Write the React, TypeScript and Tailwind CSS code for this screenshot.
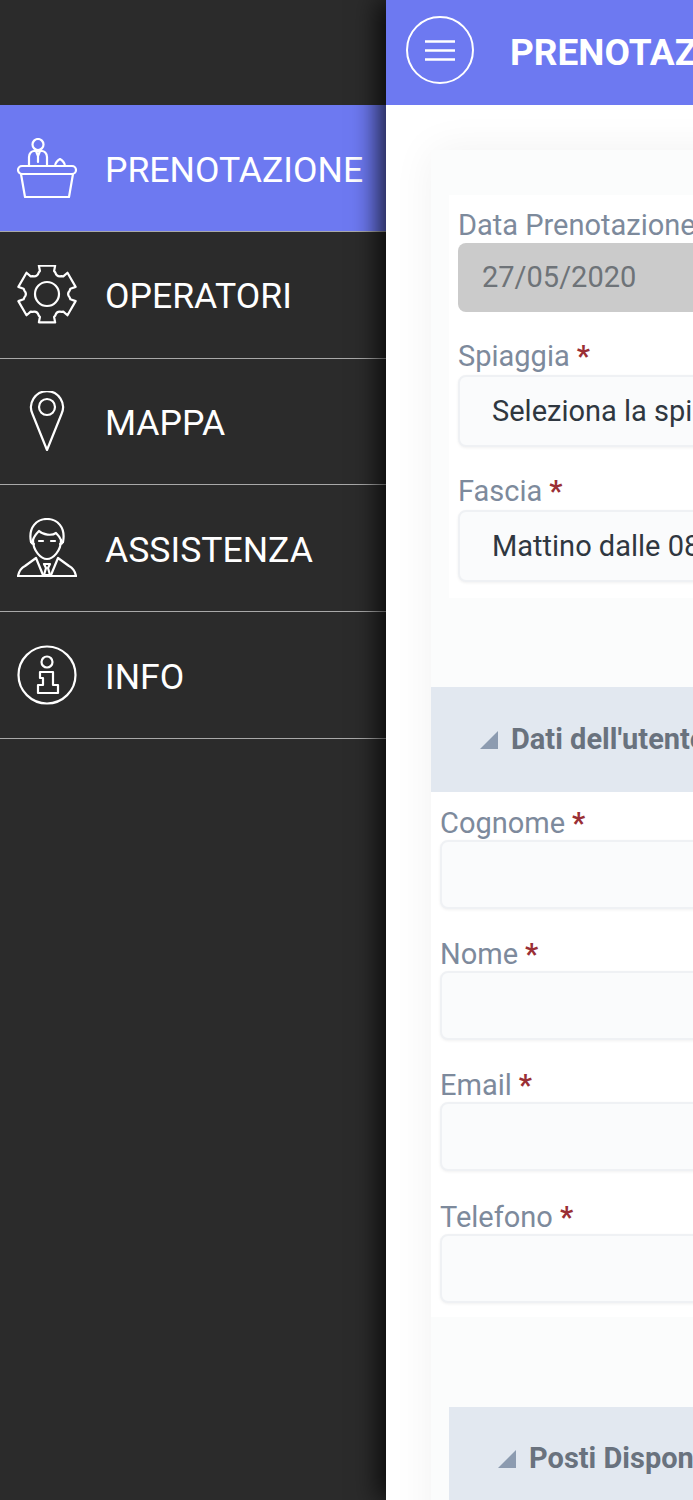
import type { ReactNode } from 'react';

const icon = {
  width: 60,
  height: 60,
  viewBox: '0 0 60 60',
  fill: 'none',
  stroke: 'currentColor',
  strokeWidth: 2.2,
  strokeLinecap: 'round' as const,
  strokeLinejoin: 'round' as const,
  className: 'shrink-0',
};

function gearPath() {
  const step = Math.PI / 3;
  const at = (r: number, a: number) =>
    `${(30 + r * Math.cos(a)).toFixed(2)} ${(29 + r * Math.sin(a)).toFixed(2)}`;
  let d = '';
  for (let i = 0; i < 6; i++) {
    const a = i * step - Math.PI / 2;
    d += i === 0 ? `M${at(23, a - 0.37)}` : `Q${at(19.5, a - step / 2)} ${at(23, a - 0.37)}`;
    d += ` L${at(24, a - 0.3)} L${at(29.5, a - 0.28)} L${at(29.5, a + 0.28)} L${at(24, a + 0.3)} L${at(23, a + 0.37)} `;
  }
  const first = -Math.PI / 2;
  return `${d} Q${at(19.5, first - step / 2)} ${at(23, first - 0.37)} Z`;
}

function ReceptionIcon() {
  return (
    <svg {...icon}>
      <circle cx="21" cy="6.5" r="5.5" />
      <path d="M12 28v-9c0-4 3-6 5-6h8c2 0 5 2 5 6v9" />
      <path d="M19 13l2 5 2-5M21 18v6" />
      <rect x="1" y="28" width="58" height="8" rx="4" />
      <path d="M4 36l4 23h44l4-23" />
      <path d="M38 28c0-3 3-6 5-7 2 1 5 4 5 7" />
    </svg>
  );
}

function GearIcon() {
  return (
    <svg {...icon}>
      <path d={gearPath()} />
      <circle cx="30" cy="29" r="12" />
    </svg>
  );
}

function PinIcon() {
  return (
    <svg {...icon}>
      <path d="M30 59L15.5 23A16 16 0 1 1 44.5 23Z" />
      <circle cx="30" cy="16" r="8" />
    </svg>
  );
}

function AgentIcon() {
  return (
    <svg {...icon}>
      <path d="M14 24C11 9 20 1 30 1s19 8 16 23" />
      <path d="M14 24c1 2 2 2 3 2M46 24c-1 2-2 2-3 2" />
      <path d="M16 22c0 11 8 19 14 19s14-8 14-19" />
      <path d="M16 22c1-4 4-7 6-9 4 4 13 5 17 2 2 2 4 4 5 7" />
      <path d="M22 23h4M34 23h4" />
      <path d="M1 58c1-5 3-8 7-10l11-8 7 17M59 58c-1-5-3-8-7-10l-11-8-7 17" />
      <path d="M1 58h58" />
      <path d="M27 46h6l-2 4 2 7h-6l2-7z" />
    </svg>
  );
}

function InfoIcon() {
  return (
    <svg {...icon}>
      <circle cx="30" cy="30" r="28.5" />
      <circle cx="30" cy="17" r="5.5" />
      <path d="M23 27h13v13h5v8H21v-8h5v-7h-3z" />
    </svg>
  );
}

const menu = [
  { label: 'PRENOTAZIONE', Icon: ReceptionIcon, active: true },
  { label: 'OPERATORI', Icon: GearIcon },
  { label: 'MAPPA', Icon: PinIcon },
  { label: 'ASSISTENZA', Icon: AgentIcon },
  { label: 'INFO', Icon: InfoIcon },
];

function Sidebar() {
  return (
    <aside className="w-[386px] shrink-0 bg-[#2b2b2b] pt-[105px] text-white">
      {menu.map(({ label, Icon, active }) => (
        <div
          key={label}
          className={`flex h-[126.8px] items-center gap-[29px] border-b border-[#a9a9a9] pl-[17px] ${
            active ? 'bg-[#6d79f1]' : ''
          }`}
        >
          <Icon />
          <span className="mt-[5px] -ml-[1px] text-[35.6px] leading-none whitespace-nowrap">{label}</span>
        </div>
      ))}
    </aside>
  );
}

function Label({ children, required }: { children: ReactNode; required?: boolean }) {
  return (
    <div
      className={`h-[33px] text-[29px] whitespace-nowrap text-[#7d8a9c] ${
        required ? 'leading-[34px]' : 'leading-[30px]'
      }`}
    >
      {children}
      {required && <span className="ml-[7px] font-bold text-[#9a2f35]">*</span>}
    </div>
  );
}

function Select({ value }: { value: string }) {
  return (
    <div className="mt-[3px] flex h-[72px] items-center rounded-lg border-2 border-[#eff1f4] bg-[#fafbfc] pl-[32px] pt-[2px] text-[29px] whitespace-nowrap text-[#2f3740] shadow-[0_1px_3px_rgba(0,0,0,0.06)]">
      {value}
    </div>
  );
}

function SectionTitle({ children }: { children: ReactNode }) {
  return (
    <div className="flex h-full items-center gap-[13px] text-[29px] font-bold whitespace-nowrap text-[#69727e]">
      <svg width="18" height="18" viewBox="0 0 18 18" className="shrink-0">
        <polygon points="0,18 18,0 18,18" fill="#8c9bb0" />
      </svg>
      {children}
    </div>
  );
}

function UserField({ label }: { label: string }) {
  return (
    <div>
      <Label required>{label}</Label>
      <div className="mt-[1px] h-[69px] rounded-lg border-2 border-[#eff1f4] bg-[#fafbfc] shadow-[0_1px_3px_rgba(0,0,0,0.06)]" />
    </div>
  );
}

export default function App() {
  return (
    <div
      className="flex h-[1500px] w-[693px] overflow-hidden bg-white"
      style={{ fontFamily: 'Roboto, sans-serif' }}
    >
      <Sidebar />
      <main className="relative min-w-0 flex-1 overflow-hidden bg-white shadow-[-8px_0_24px_rgba(0,0,0,0.75)]">
        <header className="flex h-[105px] gap-[36px] bg-[#6d79f1] pl-[20px]">
          <div className="mt-[16px] flex h-[68px] w-[68px] shrink-0 items-center justify-center rounded-full border-[2.5px] border-white">
            <svg width="32" height="21" viewBox="0 0 32 21" stroke="white" strokeWidth="2.5">
              <path d="M1 1.5h30M1 10.5h30M1 19.5h30" />
            </svg>
          </div>
          <h1 className="self-center text-[37px] font-bold whitespace-nowrap text-white">PRENOTAZIONE</h1>
        </header>

        <div className="ml-[45px] mt-[45px] w-[500px] bg-[#fbfcfc] pb-[110px] shadow-[0_0_40px_rgba(0,0,0,0.06)]">
          <div className="pt-[45px] pl-[18px]">
            <div className="h-[403px] bg-white pl-[9px] pt-[15px]">
              <Label>Data Prenotazione</Label>
              <div className="flex h-[69px] items-center rounded-lg bg-[#cbcbcb] pl-[24px] text-[29px] text-[#6e7378]">
                27/05/2020
              </div>
              <div className="mt-[27px]">
                <Label required>Spiaggia</Label>
                <Select value="Seleziona la spiaggia" />
              </div>
              <div className="mt-[27px]">
                <Label required>Fascia</Label>
                <Select value="Mattino dalle 08:00 alle 13:00" />
              </div>
            </div>
          </div>

          <div className="mt-[89px] h-[105px] bg-[#e2e8f0] pl-[49px]">
            <SectionTitle>Dati dell'utente</SectionTitle>
          </div>

          <div className="flex flex-col gap-[28.2px] bg-white pl-[9px] pt-[14px] pb-[14px]">
            <UserField label="Cognome" />
            <UserField label="Nome" />
            <UserField label="Email" />
            <UserField label="Telefono" />
          </div>

          <div className="ml-[18px] mt-[90px] h-[105px] bg-[#e2e8f0] pl-[49px]">
            <SectionTitle>Posti Disponibili</SectionTitle>
          </div>
        </div>
      </main>
    </div>
  );
}
